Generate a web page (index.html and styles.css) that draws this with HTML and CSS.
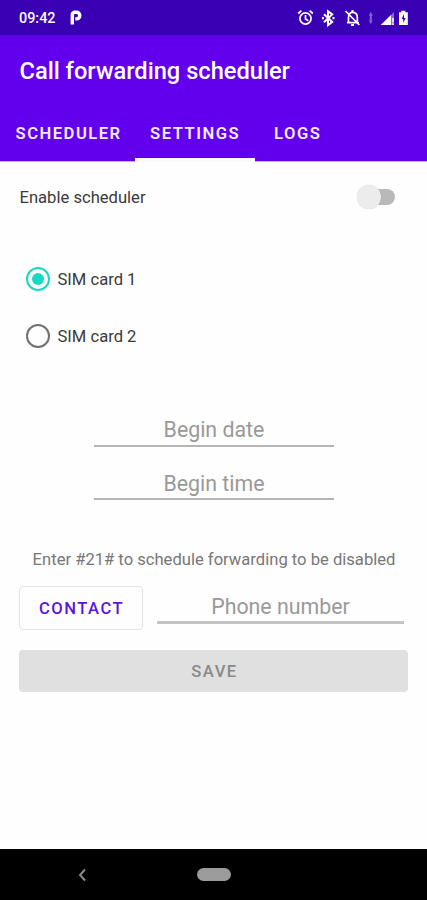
FILE: index.html
```html
<!DOCTYPE html>
<html lang="en">
<head>
<meta charset="utf-8">
<title>Call forwarding scheduler</title>
<link rel="stylesheet" href="styles.css">
</head>
<body>
<div class="screen">
  <div class="status">
    <span class="clock">09:42</span>
    <svg class="parking" width="12" height="16" viewBox="0 0 12 16"><path d="M2.3 14.5V4.8A2.5 2.5 0 0 1 4.8 2.3H6.5a3.2 3.2 0 0 1 0 6.6H5.3" fill="none" stroke="#fff" stroke-width="3.4"/></svg>
    <svg class="system" width="114" height="20" viewBox="0 0 114 20" fill="none" stroke="#fff">
      <g stroke-width="1.7"><circle cx="8.5" cy="10.5" r="5.6"/><path d="M8.5 7v4l2.8 1.7M1.2 5.5l3.2-2.8M15.8 5.5l-3.2-2.8"/></g>
      <path d="M27 6.3l8.2 7.7-4.2 3.2V3.2l4.2 3.2-8.2 7.8" stroke-width="2"/>
      <path d="M25 10.2h2M35.5 10.2h2" stroke-width="2.2"/>
      <path d="M50 14.6h12M51.5 14V9.4c0-3 1.5-4.7 4-5.2 3.3.4 4.8 2.3 4.8 5.2v4M48.5 3l13.8 14" stroke-width="1.7"/>
      <path d="M55.5 2v2.5M54 17h3" stroke-width="2"/>
      <path d="M73.8 3.8l2 4h-4zM73.8 16.2l2-4h-4zM72.8 7.5h2v5h-2z" fill="#8063d2" stroke="none"/>
      <path d="M83.8 17L97 4v13z" fill="#8c6bd6" stroke="none"/><path d="M83.8 17L94 7v10z" fill="#fff" stroke="none"/><path d="M96 10v4.5M96 15.3v1.7" stroke="#fff" stroke-width="1.5"/>
      <path d="M102 4.3h2.3V2.8h4v1.5h2.5V17H102z" fill="#fff" stroke="none"/><path d="M107 6l-2.4 5h1.6v4l2.5-5h-1.7z" fill="#3900b4" stroke="none"/>
    </svg>
  </div>
  <header class="bar">
    <h1 class="title">Call forwarding scheduler</h1>
    <nav class="tabs">
      <span class="tab tab-scheduler">SCHEDULER</span>
      <span class="tab tab-settings">SETTINGS</span>
      <span class="tab tab-logs">LOGS</span>
    </nav>
  </header>
  <main class="content">
    <div class="enable"><span class="label">Enable scheduler</span><span class="switch"><span class="knob"></span></span></div>
    <div class="sims">
      <div class="sim"><span class="radio checked"></span><span class="label">SIM card 1</span></div>
      <div class="sim"><span class="radio"></span><span class="label">SIM card 2</span></div>
    </div>
    <div class="fields">
      <div class="field date">Begin date</div>
      <div class="field time">Begin time</div>
    </div>
    <p class="hint">Enter #21# to schedule forwarding to be disabled</p>
    <div class="phone-row">
      <div class="contact">CONTACT</div>
      <div class="field phone">Phone number</div>
    </div>
    <div class="save">SAVE</div>
  </main>
  <footer class="navbar">
    <svg class="back" width="10" height="14" viewBox="0 0 10 14"><path d="M8 1.5L3 7 8 12.5" fill="none" stroke="#8b8b8b" stroke-width="2"/></svg>
    <span class="home"></span>
  </footer>
</div>
</body>
</html>
```
FILE: styles.css
```css
* { box-sizing: border-box; }
body { margin: 0; font-family: Roboto, sans-serif; background: #fefefe; }
.screen { width: 427px; height: 900px; display: flex; flex-direction: column; overflow: hidden; }
.status { height: 35px; background: #3900b4; display: flex; align-items: center; padding: 1px 16px 0 19px; color: #fff; }
.clock { font-size: 14.4px; font-weight: 500; line-height: 20px; width: 51px; padding-top: 2px; }
.system { margin-left: auto; }
.bar { height: 127px; background: #6200ed; border-bottom: 1px solid #c9aff7; display: flex; flex-direction: column; color: #fff; }
.title { margin: 0; height: 71px; padding-left: 19.5px; font-size: 23.65px; font-weight: 500; line-height: 72px; }
.tabs { height: 55px; display: flex; }
.tab { height: 56px; line-height: 55px; font-size: 16.6px; font-weight: 600; letter-spacing: 1.5px; color: #f3eaff; white-space: nowrap; }
.tab-scheduler { width: 135px; padding-left: 15.5px; }
.tab-settings { width: 120px; padding-left: 15px; border-bottom: 4px solid #fafafa; }
.tab-logs { padding-left: 19px; }
.content { flex: 1; padding: 15px 19px 0; }
.label { font-size: 16.6px; color: #3a3a3a; white-space: nowrap; }
.enable { height: 40px; display: flex; align-items: center; justify-content: space-between; padding-right: 13px; }
.enable .label { padding-left: .5px; }
.switch { width: 34px; height: 16px; border-radius: 8px; background: #b9b9b9; display: flex; align-items: center; }
.knob { width: 24px; height: 24px; flex: none; border-radius: 50%; background: #ececec; margin-left: -4px; box-shadow: 0 0 1px #0003; }
.sims { padding: 33px 0 0 7px; }
.sim { height: 57px; display: flex; align-items: center; gap: 7.5px; }
.sim .label { padding-top: 2px; }
.radio { width: 24px; height: 24px; border: 2px solid #707070; border-radius: 50%; display: flex; align-items: center; justify-content: center; }
.checked { border-color: #18d8c1; }
.checked::after { content: ""; width: 12px; height: 12px; border-radius: 50%; background: #18d8c1; }
.fields { width: 240px; margin: 47px auto 0 75px; }
.field { border-bottom: 2px solid #b5b5b5; color: #999; font-size: 21.35px; text-align: center; white-space: nowrap; }
.date { height: 36px; line-height: 38px; }
.time { height: 53px; line-height: 73px; }
.hint { margin: 47px 0 0; height: 25px; line-height: 25px; font-size: 16.6px; color: #777; text-align: center; white-space: nowrap; padding-left: 1px; }
.phone-row { display: flex; margin-top: 14px; height: 44px; }
.contact { width: 124px; height: 44px; border: 1px solid #e4e4e4; border-radius: 4px; color: #5b16dc; font-size: 16.6px; font-weight: 500; letter-spacing: 1.5px; line-height: 43px; text-align: center; padding-left: 1px; }
.phone { width: 247px; height: 38px; line-height: 41px; margin-left: 14px; border-bottom-width: 3px; border-color: #c3c3c3; }
.save { height: 42px; margin-top: 20px; border-radius: 4px; background: #e0e0e0; color: #898989; font-size: 16.6px; font-weight: 500; letter-spacing: 1.5px; line-height: 43px; text-align: center; padding-left: 2px; }
.navbar { height: 51px; background: #000; display: flex; align-items: center; padding-left: 77px; }
.home { width: 34px; height: 13px; border-radius: 7px; background: #9c9c9c; margin-left: 110px; }
```
